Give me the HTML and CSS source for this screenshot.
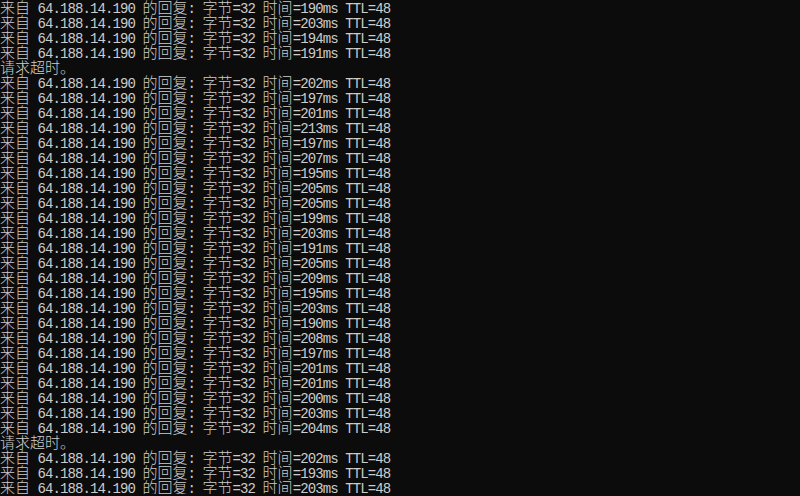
FILE: index.html
```html
<!DOCTYPE html>
<html lang="zh-CN">
<head>
<meta charset="utf-8">
<title>ping</title>
<link rel="stylesheet" href="styles.css">
</head>
<body>
<div class="console">
<div class="ln"><span class="c">来自</span> 64.188.14.190 <span class="c">的回复</span>: <span class="c">字节</span>=32 <span class="c">时间</span>=190ms TTL=48</div>
<div class="ln"><span class="c">来自</span> 64.188.14.190 <span class="c">的回复</span>: <span class="c">字节</span>=32 <span class="c">时间</span>=203ms TTL=48</div>
<div class="ln"><span class="c">来自</span> 64.188.14.190 <span class="c">的回复</span>: <span class="c">字节</span>=32 <span class="c">时间</span>=194ms TTL=48</div>
<div class="ln"><span class="c">来自</span> 64.188.14.190 <span class="c">的回复</span>: <span class="c">字节</span>=32 <span class="c">时间</span>=191ms TTL=48</div>
<div class="ln"><span class="c">请求超时。</span></div>
<div class="ln"><span class="c">来自</span> 64.188.14.190 <span class="c">的回复</span>: <span class="c">字节</span>=32 <span class="c">时间</span>=202ms TTL=48</div>
<div class="ln"><span class="c">来自</span> 64.188.14.190 <span class="c">的回复</span>: <span class="c">字节</span>=32 <span class="c">时间</span>=197ms TTL=48</div>
<div class="ln"><span class="c">来自</span> 64.188.14.190 <span class="c">的回复</span>: <span class="c">字节</span>=32 <span class="c">时间</span>=201ms TTL=48</div>
<div class="ln"><span class="c">来自</span> 64.188.14.190 <span class="c">的回复</span>: <span class="c">字节</span>=32 <span class="c">时间</span>=213ms TTL=48</div>
<div class="ln"><span class="c">来自</span> 64.188.14.190 <span class="c">的回复</span>: <span class="c">字节</span>=32 <span class="c">时间</span>=197ms TTL=48</div>
<div class="ln"><span class="c">来自</span> 64.188.14.190 <span class="c">的回复</span>: <span class="c">字节</span>=32 <span class="c">时间</span>=207ms TTL=48</div>
<div class="ln"><span class="c">来自</span> 64.188.14.190 <span class="c">的回复</span>: <span class="c">字节</span>=32 <span class="c">时间</span>=195ms TTL=48</div>
<div class="ln"><span class="c">来自</span> 64.188.14.190 <span class="c">的回复</span>: <span class="c">字节</span>=32 <span class="c">时间</span>=205ms TTL=48</div>
<div class="ln"><span class="c">来自</span> 64.188.14.190 <span class="c">的回复</span>: <span class="c">字节</span>=32 <span class="c">时间</span>=205ms TTL=48</div>
<div class="ln"><span class="c">来自</span> 64.188.14.190 <span class="c">的回复</span>: <span class="c">字节</span>=32 <span class="c">时间</span>=199ms TTL=48</div>
<div class="ln"><span class="c">来自</span> 64.188.14.190 <span class="c">的回复</span>: <span class="c">字节</span>=32 <span class="c">时间</span>=203ms TTL=48</div>
<div class="ln"><span class="c">来自</span> 64.188.14.190 <span class="c">的回复</span>: <span class="c">字节</span>=32 <span class="c">时间</span>=191ms TTL=48</div>
<div class="ln"><span class="c">来自</span> 64.188.14.190 <span class="c">的回复</span>: <span class="c">字节</span>=32 <span class="c">时间</span>=205ms TTL=48</div>
<div class="ln"><span class="c">来自</span> 64.188.14.190 <span class="c">的回复</span>: <span class="c">字节</span>=32 <span class="c">时间</span>=209ms TTL=48</div>
<div class="ln"><span class="c">来自</span> 64.188.14.190 <span class="c">的回复</span>: <span class="c">字节</span>=32 <span class="c">时间</span>=195ms TTL=48</div>
<div class="ln"><span class="c">来自</span> 64.188.14.190 <span class="c">的回复</span>: <span class="c">字节</span>=32 <span class="c">时间</span>=203ms TTL=48</div>
<div class="ln"><span class="c">来自</span> 64.188.14.190 <span class="c">的回复</span>: <span class="c">字节</span>=32 <span class="c">时间</span>=190ms TTL=48</div>
<div class="ln"><span class="c">来自</span> 64.188.14.190 <span class="c">的回复</span>: <span class="c">字节</span>=32 <span class="c">时间</span>=208ms TTL=48</div>
<div class="ln"><span class="c">来自</span> 64.188.14.190 <span class="c">的回复</span>: <span class="c">字节</span>=32 <span class="c">时间</span>=197ms TTL=48</div>
<div class="ln"><span class="c">来自</span> 64.188.14.190 <span class="c">的回复</span>: <span class="c">字节</span>=32 <span class="c">时间</span>=201ms TTL=48</div>
<div class="ln"><span class="c">来自</span> 64.188.14.190 <span class="c">的回复</span>: <span class="c">字节</span>=32 <span class="c">时间</span>=201ms TTL=48</div>
<div class="ln"><span class="c">来自</span> 64.188.14.190 <span class="c">的回复</span>: <span class="c">字节</span>=32 <span class="c">时间</span>=200ms TTL=48</div>
<div class="ln"><span class="c">来自</span> 64.188.14.190 <span class="c">的回复</span>: <span class="c">字节</span>=32 <span class="c">时间</span>=203ms TTL=48</div>
<div class="ln"><span class="c">来自</span> 64.188.14.190 <span class="c">的回复</span>: <span class="c">字节</span>=32 <span class="c">时间</span>=204ms TTL=48</div>
<div class="ln"><span class="c">请求超时。</span></div>
<div class="ln"><span class="c">来自</span> 64.188.14.190 <span class="c">的回复</span>: <span class="c">字节</span>=32 <span class="c">时间</span>=202ms TTL=48</div>
<div class="ln"><span class="c">来自</span> 64.188.14.190 <span class="c">的回复</span>: <span class="c">字节</span>=32 <span class="c">时间</span>=193ms TTL=48</div>
<div class="ln"><span class="c">来自</span> 64.188.14.190 <span class="c">的回复</span>: <span class="c">字节</span>=32 <span class="c">时间</span>=203ms TTL=48</div>
</div>
</body>
</html>
```

FILE: styles.css
```css
html, body {
  margin: 0;
  padding: 0;
  background: #0c0c0c;
  overflow: hidden;
}
.console {
  margin-top: -1px;
  color: #cccccc;
  font-family: "Liberation Mono", monospace;
  font-size: 14px;
  letter-spacing: -0.9px;
}
.ln {
  height: 15px;
  line-height: 15px;
  white-space: pre;
  overflow: visible;
}
.c {
  font-family: "Noto Sans CJK SC", sans-serif;
  font-size: 15px;
  font-weight: 300;
  letter-spacing: 0;
}
```
